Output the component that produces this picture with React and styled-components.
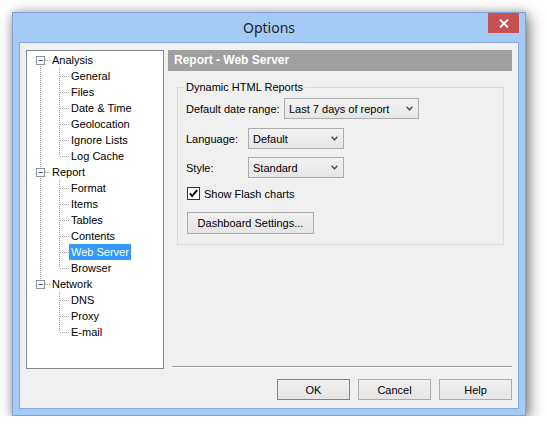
import React from 'react';
import styled, { createGlobalStyle } from 'styled-components';

const GlobalStyle = createGlobalStyle`
  body {
    margin: 0;
    background: #ffffff;
    font-family: "Liberation Sans", Arial, sans-serif;
    font-size: 11px;
    color: #000;
  }
`;

const Page = styled.div`
  padding: 12px 0 0 12px;
`;

const Window = styled.div`
  box-sizing: border-box;
  width: 514px;
  height: 404px;
  border: 1px solid #7fa3d6;
  background: #a4cbf6;
  padding: 0 6px 6px 6px;
  display: flex;
  flex-direction: column;
  box-shadow: 3px 4px 14px rgba(0, 0, 0, 0.5), 0 0 8px rgba(0, 0, 0, 0.18);
`;

const TitleBar = styled.div`
  height: 29px;
  display: grid;
  grid-template-columns: 1fr auto 1fr;
  align-items: center;
`;

const Title = styled.div`
  font-family: "Noto Sans", "Open Sans", sans-serif;
  font-size: 14px;
  color: #222;
  line-height: 29px;
`;

const CloseButton = styled.div`
  justify-self: end;
  align-self: start;
  width: 31px;
  height: 20px;
  background: #c75050;
  display: flex;
  align-items: center;
  justify-content: center;
`;

const Client = styled.div`
  flex: 1;
  box-sizing: border-box;
  border: 1px solid #86aadb;
  background: #f0f0f0;
  padding: 7px 6px 8px 6px;
  display: flex;
  align-items: flex-start;
  gap: 4px;
`;

const TreeBox = styled.div`
  box-sizing: border-box;
  width: 138px;
  height: 319px;
  border: 1px solid #828790;
  background: #fff;
  padding: 1px 0 0 4px;
`;

const TreeRow = styled.div`
  display: flex;
  height: 16px;
`;

const TreeLabel = styled.span`
  height: 16px;
  line-height: 16px;
  padding: 0 2px;
  white-space: nowrap;
  background: ${(p) => (p.$selected ? '#3399ff' : 'transparent')};
  color: ${(p) => (p.$selected ? '#fff' : '#000')};
`;

const Panel = styled.div`
  width: 344px;
  align-self: stretch;
  display: flex;
  flex-direction: column;
`;

const PanelHeader = styled.div`
  height: 21px;
  line-height: 21px;
  background: #a0a0a0;
  color: #fff;
  font-weight: bold;
  font-size: 12px;
  padding-left: 6px;
`;

const GroupBox = styled.fieldset`
  margin: 9px 8px 0 9px;
  padding: 4px 8px 10px 8px;
  border: 1px solid #dcdcdc;
  min-width: 0;
`;

const Legend = styled.legend`
  padding: 0 2px;
  margin-left: -2px;
  line-height: 14px;
  font-size: 11px;
`;

const FieldRow = styled.div`
  display: flex;
  align-items: center;
  height: 21px;
  margin-top: ${(p) => p.$mt || 0}px;
`;

const FieldLabel = styled.span`
  width: ${(p) => p.$width}px;
  flex-shrink: 0;
`;

const Select = styled.div`
  box-sizing: border-box;
  width: ${(p) => p.$width}px;
  height: 21px;
  border: 1px solid #acacac;
  background: linear-gradient(#f2f2f2, #e5e5e5);
  padding: 0 5px 0 4px;
  display: flex;
  align-items: center;
  justify-content: space-between;
`;

const CheckRow = styled.label`
  display: flex;
  align-items: center;
  gap: 4px;
  height: 13px;
  margin: 9px 0 0 1px;
`;

const CheckBox = styled.span`
  box-sizing: border-box;
  width: 13px;
  height: 13px;
  border: 1px solid #333;
  background: #fff;
  display: flex;
  align-items: center;
  justify-content: center;
`;

const Button = styled.div`
  box-sizing: border-box;
  width: ${(p) => p.$width || 73}px;
  height: ${(p) => p.$height || 21}px;
  border: 1px solid ${(p) => (p.$default ? '#4a90d9' : '#acacac')};
  background: linear-gradient(#f0f0f0, #e5e5e5);
  display: flex;
  align-items: center;
  justify-content: center;
`;

const DashboardButton = styled(Button)`
  margin: 12px 0 0 1px;
`;

const Spacer = styled.div`
  flex: 1;
`;

const Separator = styled.div`
  margin-left: 4px;
  border-top: 1px solid #a0a0a0;
  border-bottom: 1px solid #fff;
`;

const ButtonRow = styled.div`
  margin-top: 11px;
  display: flex;
  justify-content: flex-end;
  gap: 8px;
`;

const LINE = '#a0a0a0';

function Cell({ up, down, right, expander }) {
  return (
    <svg width="19" height="16" style={{ flexShrink: 0 }}>
      {(up || down) && (
        <line
          x1="9.5"
          x2="9.5"
          y1={up ? 0 : 8}
          y2={down ? 16 : 8}
          stroke={LINE}
          strokeDasharray="1 1"
        />
      )}
      {right && <line x1="10" x2="19" y1="8.5" y2="8.5" stroke={LINE} strokeDasharray="1 1" />}
      {expander && (
        <g>
          <rect x="5.5" y="4.5" width="8" height="8" fill="#fff" stroke="#919191" />
          <line x1="7.5" x2="12" y1="8.5" y2="8.5" stroke="#3b5fae" />
        </g>
      )}
    </svg>
  );
}

const tree = [
  { label: 'Analysis', children: ['General', 'Files', 'Date & Time', 'Geolocation', 'Ignore Lists', 'Log Cache'] },
  { label: 'Report', children: ['Format', 'Items', 'Tables', 'Contents', 'Web Server', 'Browser'] },
  { label: 'Network', children: ['DNS', 'Proxy', 'E-mail'] },
];

function Tree() {
  const rows = [];
  tree.forEach((node, i) => {
    const lastRoot = i === tree.length - 1;
    rows.push(
      <TreeRow key={node.label}>
        <Cell up={i > 0} down={!lastRoot} right expander />
        <TreeLabel>{node.label}</TreeLabel>
      </TreeRow>
    );
    node.children.forEach((child, j) => {
      const lastChild = j === node.children.length - 1;
      rows.push(
        <TreeRow key={child}>
          <Cell up={!lastRoot} down={!lastRoot} />
          <Cell up down={!lastChild} right />
          <TreeLabel $selected={child === 'Web Server'}>{child}</TreeLabel>
        </TreeRow>
      );
    });
  });
  return <TreeBox>{rows}</TreeBox>;
}

const Chevron = () => (
  <svg width="7" height="5" viewBox="0 0 7 5">
    <path d="M0.6 0.8 L3.5 3.8 L6.4 0.8" fill="none" stroke="#555" strokeWidth="1.6" />
  </svg>
);

export default function App() {
  return (
    <Page>
      <GlobalStyle />
      <Window>
        <TitleBar>
          <span />
          <Title>Options</Title>
          <CloseButton>
            <svg width="10" height="9" viewBox="0 0 10 9">
              <path d="M1 0.5 L9 8.5 M9 0.5 L1 8.5" stroke="#fff" strokeWidth="1.8" />
            </svg>
          </CloseButton>
        </TitleBar>
        <Client>
          <Tree />
          <Panel>
            <PanelHeader>Report - Web Server</PanelHeader>
            <GroupBox>
              <Legend>Dynamic HTML Reports</Legend>
              <FieldRow>
                <FieldLabel $width={98}>Default date range:</FieldLabel>
                <Select $width={135}>
                  Last 7 days of report
                  <Chevron />
                </Select>
              </FieldRow>
              <FieldRow $mt={9}>
                <FieldLabel $width={62}>Language:</FieldLabel>
                <Select $width={96}>
                  Default
                  <Chevron />
                </Select>
              </FieldRow>
              <FieldRow $mt={8}>
                <FieldLabel $width={62}>Style:</FieldLabel>
                <Select $width={96}>
                  Standard
                  <Chevron />
                </Select>
              </FieldRow>
              <CheckRow>
                <CheckBox>
                  <svg width="11" height="11" viewBox="0 0 11 11">
                    <path d="M1.8 5.4 L4.2 7.9 L9.2 2.2" fill="none" stroke="#000" strokeWidth="2" />
                  </svg>
                </CheckBox>
                Show Flash charts
              </CheckRow>
              <DashboardButton $width={127} $height={22}>Dashboard Settings...</DashboardButton>
            </GroupBox>
            <Spacer />
            <Separator />
            <ButtonRow>
              <Button $default>OK</Button>
              <Button>Cancel</Button>
              <Button>Help</Button>
            </ButtonRow>
          </Panel>
        </Client>
      </Window>
    </Page>
  );
}
